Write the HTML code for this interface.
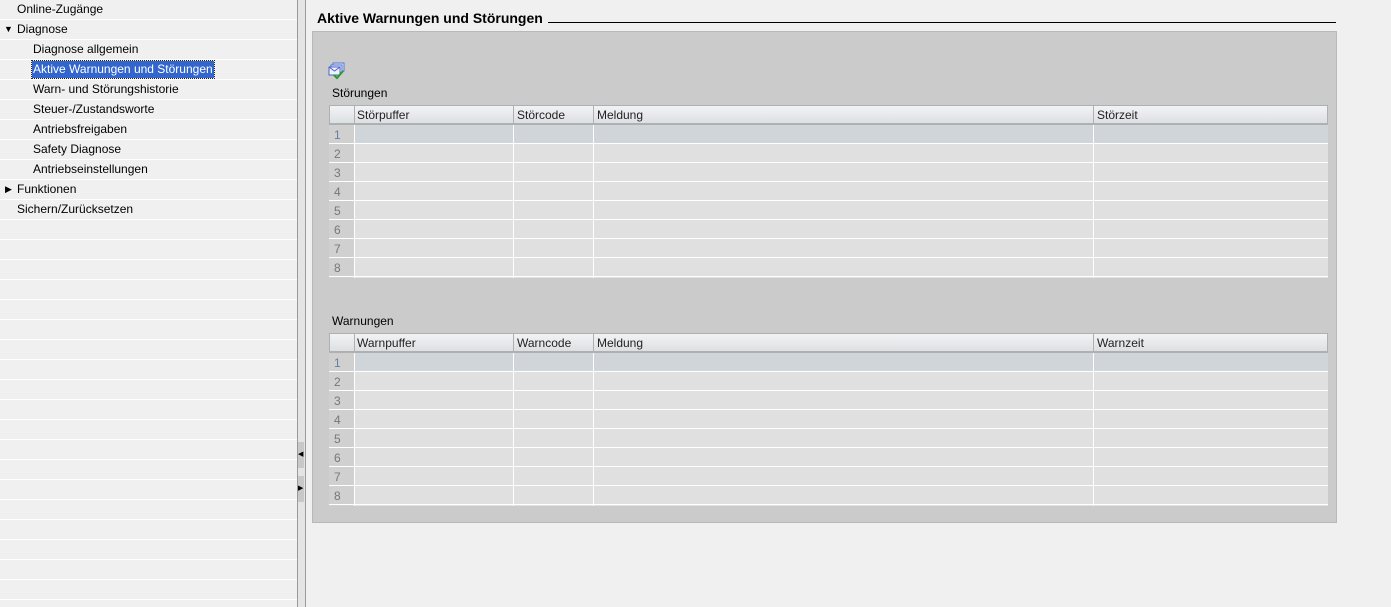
<!DOCTYPE html>
<html><head><meta charset="utf-8"><style>
*{margin:0;padding:0;box-sizing:border-box}
body{width:1391px;height:607px;background:#f0f0f0;font-family:"Liberation Sans",sans-serif;font-size:12px;color:#000;position:relative;overflow:hidden}
.abs{position:absolute}
.nav{left:0;top:0;width:297px;height:607px;background:#f0f0f0}
.row{position:absolute;left:0;width:297px;height:20px;border-bottom:1px solid #fff;line-height:19px}
.row span{position:absolute;white-space:nowrap}
.sel{background:#3366cc;color:#fff;outline:1px dotted #222;padding:0 1px;height:17px;line-height:16px;top:1px}
.tbl{position:absolute;left:329px;width:999px;background:#e0e0e0}
.hdr{position:absolute;left:0;top:0;width:999px;height:20px;background:linear-gradient(#f2f3f5,#dde0e4);border:1px solid #b0b0b0;border-bottom:2px solid #b0b0b0}
.hdr span{position:absolute;top:2px;color:#222}
.vl{position:absolute;width:1px;background:#fff}
.hl{position:absolute;left:0;height:1px;background:#fff;width:999px}
.num{position:absolute;left:0;width:25px;background:#d0d0d0}
.num span{position:absolute;left:5px;color:#777;font-size:12px}
</style></head><body>
<div class="abs nav">
<div class="row" style="top:0"><span style="left:17px">Online-Zugänge</span></div>
<div class="row" style="top:20px"><span style="left:4px;font-size:9px">▼</span><span style="left:17px">Diagnose</span></div>
<div class="row" style="top:40px"><span style="left:33px">Diagnose allgemein</span></div>
<div class="row" style="top:60px"><span class="sel" style="left:32px">Aktive Warnungen und Störungen</span></div>
<div class="row" style="top:80px"><span style="left:33px">Warn- und Störungshistorie</span></div>
<div class="row" style="top:100px"><span style="left:33px">Steuer-/Zustandsworte</span></div>
<div class="row" style="top:120px"><span style="left:33px">Antriebsfreigaben</span></div>
<div class="row" style="top:140px"><span style="left:33px">Safety Diagnose</span></div>
<div class="row" style="top:160px"><span style="left:33px">Antriebseinstellungen</span></div>
<div class="row" style="top:180px"><span style="left:5px;font-size:9px">▶</span><span style="left:17px">Funktionen</span></div>
<div class="row" style="top:200px"><span style="left:17px">Sichern/Zurücksetzen</span></div>
<div class="row" style="top:220px"></div><div class="row" style="top:240px"></div><div class="row" style="top:260px"></div><div class="row" style="top:280px"></div><div class="row" style="top:300px"></div><div class="row" style="top:320px"></div><div class="row" style="top:340px"></div><div class="row" style="top:360px"></div><div class="row" style="top:380px"></div><div class="row" style="top:400px"></div><div class="row" style="top:420px"></div><div class="row" style="top:440px"></div><div class="row" style="top:460px"></div><div class="row" style="top:480px"></div><div class="row" style="top:500px"></div><div class="row" style="top:520px"></div><div class="row" style="top:540px"></div><div class="row" style="top:560px"></div><div class="row" style="top:580px"></div>
</div>
<div class="abs" style="left:297px;top:0;width:9px;height:607px;background:#e4e4e4;border-left:1px solid #9a9a9a;border-right:1px solid #9a9a9a"></div>
<div class="abs" style="left:298px;top:442px;width:6px;height:26px;background:#c8c8c8;font-size:7px;line-height:26px">◀</div>
<div class="abs" style="left:298px;top:476px;width:6px;height:26px;background:#c8c8c8;font-size:7px;line-height:26px">▶</div>

<div class="abs" style="left:317px;top:10px;font-weight:bold;font-size:14px">Aktive Warnungen und Störungen</div>
<div class="abs" style="left:548px;top:22px;width:788px;height:1px;background:#000"></div>
<div class="abs" style="left:312px;top:31px;width:1025px;height:492px;background:#cbcbcb;border:1px solid #b8b8b8"></div>
<svg class="abs" style="left:328px;top:62px" width="18" height="18" viewBox="0 0 18 18"><rect x="5" y="1" width="11" height="8" fill="#dfe6fb" stroke="#5a74d0"/><rect x="3" y="3" width="11" height="8" fill="#dfe6fb" stroke="#5a74d0"/><rect x="1" y="5" width="11" height="8" fill="#eef2fd" stroke="#4a64c8"/><path d="M1 5l5.5 4 5.5-4" fill="none" stroke="#4a64c8"/><path d="M6 13l3 3 6-7" fill="none" stroke="#2a9a2a" stroke-width="2"/></svg>
<div class="abs" style="left:332px;top:86px">Störungen</div>
<div class="abs" style="left:332px;top:314px">Warnungen</div>

<div class="tbl" style="top:105px;height:173px">
<div class="num" style="top:20px;height:153px"></div>
<div class="abs" style="left:25px;top:20px;width:974px;height:19px;background:#d0d5da"></div>
<div class="hl" style="top:38px"></div><div class="hl" style="top:57px"></div><div class="hl" style="top:76px"></div><div class="hl" style="top:95px"></div><div class="hl" style="top:114px"></div><div class="hl" style="top:133px"></div><div class="hl" style="top:152px"></div><div class="hl" style="top:171px"></div>
<div class="vl" style="left:25px;top:20px;height:153px"></div><div class="vl" style="left:184px;top:20px;height:153px"></div><div class="vl" style="left:264px;top:20px;height:153px"></div><div class="vl" style="left:764px;top:20px;height:153px"></div>
<div class="num" style="top:20px;height:0"></div>
<div class="abs" style="left:5px;top:23px;color:#6a7f9a">1</div><div class="abs" style="left:5px;top:42px;color:#777">2</div><div class="abs" style="left:5px;top:61px;color:#777">3</div><div class="abs" style="left:5px;top:80px;color:#777">4</div><div class="abs" style="left:5px;top:99px;color:#777">5</div><div class="abs" style="left:5px;top:118px;color:#777">6</div><div class="abs" style="left:5px;top:137px;color:#777">7</div><div class="abs" style="left:5px;top:156px;color:#777">8</div>
<div class="hdr"><span style="left:27px">Störpuffer</span><span style="left:187px">Störcode</span><span style="left:267px">Meldung</span><span style="left:767px">Störzeit</span>
<div class="abs" style="left:24px;top:0;width:1px;height:18px;background:#b0b0b0"></div><div class="abs" style="left:183px;top:0;width:1px;height:18px;background:#b0b0b0"></div><div class="abs" style="left:263px;top:0;width:1px;height:18px;background:#b0b0b0"></div><div class="abs" style="left:763px;top:0;width:1px;height:18px;background:#b0b0b0"></div></div>
</div>

<div class="tbl" style="top:333px;height:173px">
<div class="num" style="top:20px;height:153px"></div>
<div class="abs" style="left:25px;top:20px;width:974px;height:19px;background:#d0d5da"></div>
<div class="hl" style="top:38px"></div><div class="hl" style="top:57px"></div><div class="hl" style="top:76px"></div><div class="hl" style="top:95px"></div><div class="hl" style="top:114px"></div><div class="hl" style="top:133px"></div><div class="hl" style="top:152px"></div><div class="hl" style="top:171px"></div>
<div class="vl" style="left:25px;top:20px;height:153px"></div><div class="vl" style="left:184px;top:20px;height:153px"></div><div class="vl" style="left:264px;top:20px;height:153px"></div><div class="vl" style="left:764px;top:20px;height:153px"></div>
<div class="abs" style="left:5px;top:23px;color:#6a7f9a">1</div><div class="abs" style="left:5px;top:42px;color:#777">2</div><div class="abs" style="left:5px;top:61px;color:#777">3</div><div class="abs" style="left:5px;top:80px;color:#777">4</div><div class="abs" style="left:5px;top:99px;color:#777">5</div><div class="abs" style="left:5px;top:118px;color:#777">6</div><div class="abs" style="left:5px;top:137px;color:#777">7</div><div class="abs" style="left:5px;top:156px;color:#777">8</div>
<div class="hdr"><span style="left:27px">Warnpuffer</span><span style="left:187px">Warncode</span><span style="left:267px">Meldung</span><span style="left:767px">Warnzeit</span>
<div class="abs" style="left:24px;top:0;width:1px;height:18px;background:#b0b0b0"></div><div class="abs" style="left:183px;top:0;width:1px;height:18px;background:#b0b0b0"></div><div class="abs" style="left:263px;top:0;width:1px;height:18px;background:#b0b0b0"></div><div class="abs" style="left:763px;top:0;width:1px;height:18px;background:#b0b0b0"></div></div>
</div>
</body></html>
